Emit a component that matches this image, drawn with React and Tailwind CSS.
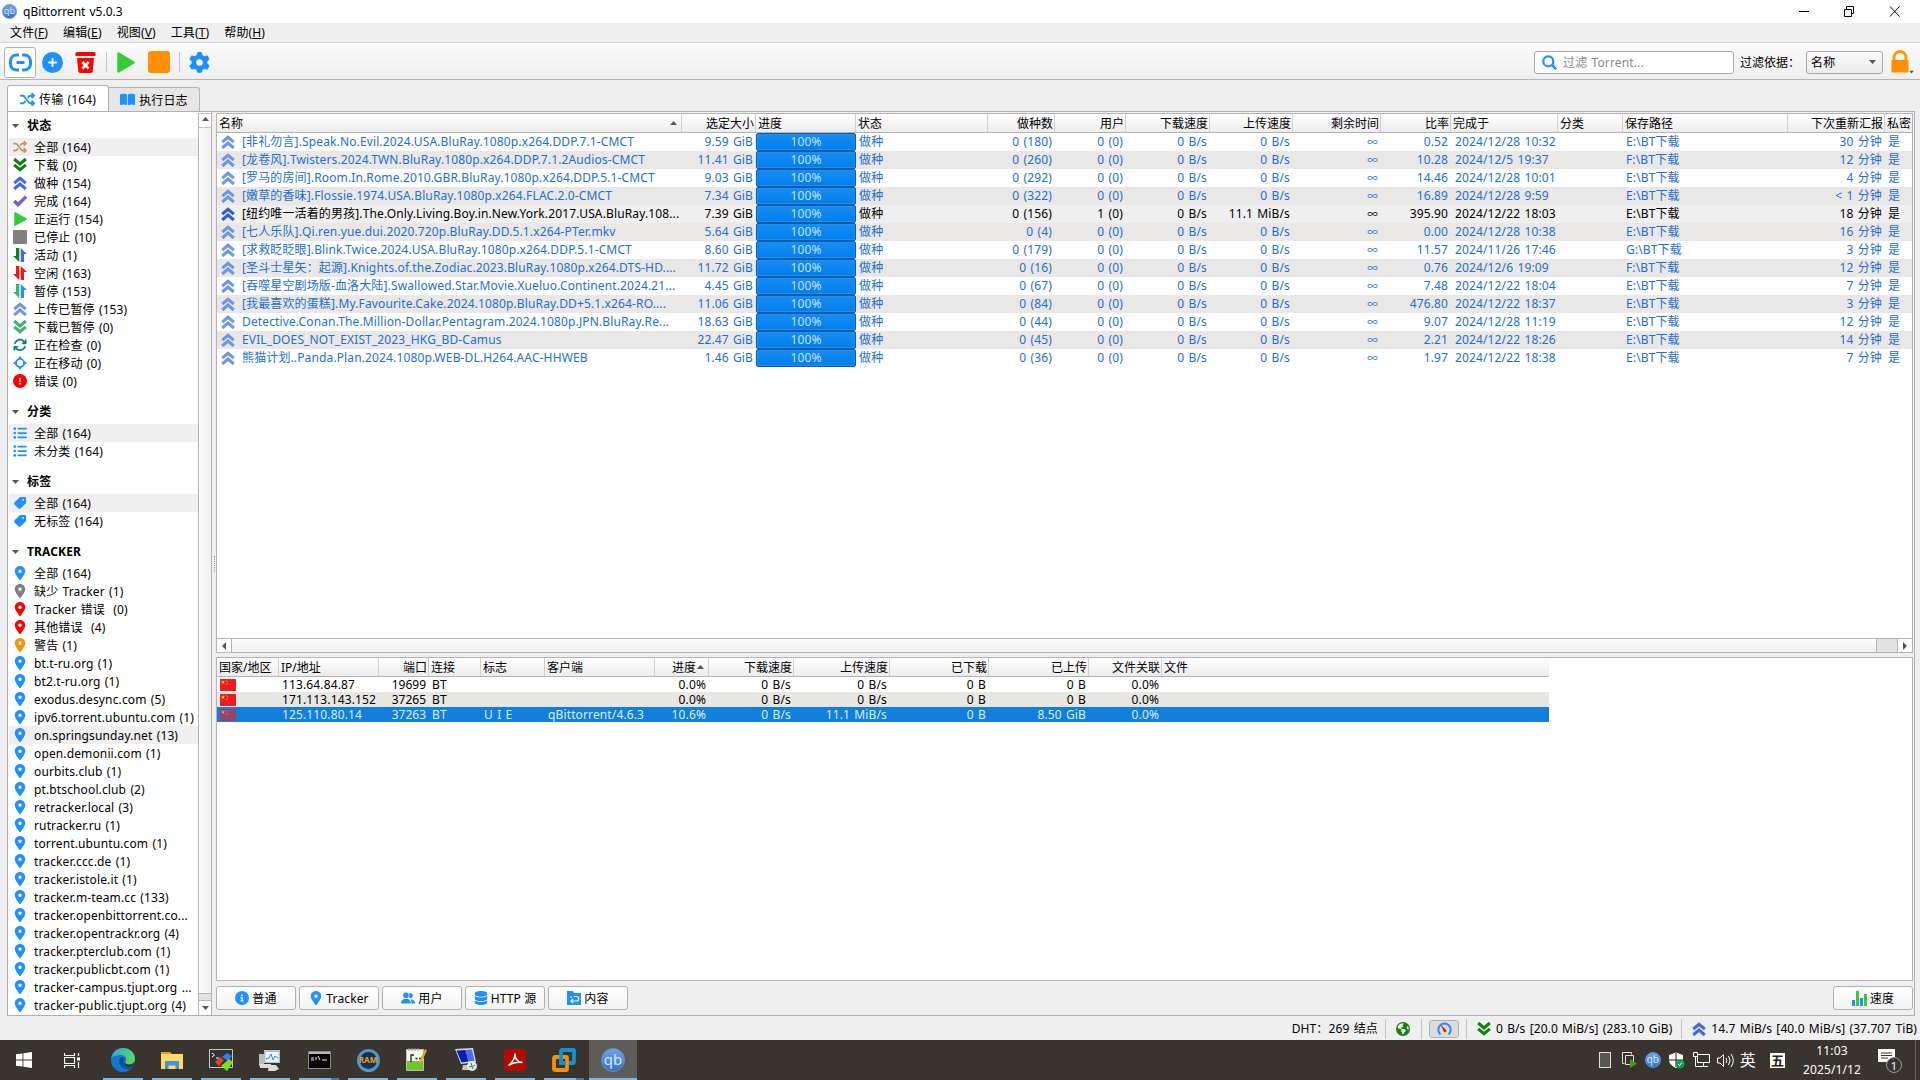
import React from "react";
import {
  FaShuffle, FaLocationDot, FaCirclePlus, FaGear, FaUserGroup, FaDatabase, FaCircleInfo,
  FaCircleExclamation, FaListUl, FaTag, FaBookOpen, FaArrowsRotate, FaEarthAmericas,
} from "react-icons/fa6";

const BLUE = "#1e90ff";

function Chevrons({ color, down, size = 14 }) {
  return (
    <svg width={size} height={size} viewBox="0 0 14 14" className="shrink-0">
      <g fill="none" stroke={color} strokeWidth="3.1" transform={down ? "rotate(180 7 7)" : undefined}>
        <path d="M1.2 7.1 7 2.2l5.8 4.900" />
        <path d="M1.2 13 7 8.100l5.8 4.900" />
      </g>
    </svg>
  );
}

function Arrows({ left, right }) {
  return (
    <svg width="14" height="14" viewBox="0 0 14 14" className="shrink-0">
      <path d="M3 0h3.300v14L0 8h3z" fill={left} />
      <path d="M7.700 14H11V6h3L7.700 0z" fill={right} />
    </svg>
  );
}

function Check() {
  return (
    <svg width="14" height="14" viewBox="0 0 14 14" fill="none" className="shrink-0">
      <path d="m1.200 7 3.800 3.600 8-8" stroke="#7b5bd0" strokeWidth="3.400" />
    </svg>
  );
}

function Play({ w, h }) {
  return (
    <svg width={w} height={h} viewBox="0 0 18 21" preserveAspectRatio="none" className="shrink-0">
      <path d="M1.5 1.5 16.5 10.5 1.5 19.5z" fill="#32cd32" stroke="#32cd32" strokeWidth="2.4" strokeLinejoin="round" />
    </svg>
  );
}

function Diamond() {
  return (
    <svg width="14" height="14" viewBox="0 0 14 14" className="shrink-0">
      <circle cx="7" cy="7" r="4" fill="none" stroke={BLUE} strokeWidth="1.7" />
      <path d="M7 0 9 3H5zM7 14 9 11H5zM0 7 3 5v4zM14 7 11 5v4z" fill={BLUE} />
    </svg>
  );
}

function Bars() {
  return (
    <svg width="15" height="15" viewBox="0 0 15 15" className="shrink-0">
      <path d="M0 9h3v6H0zM8 7h3v8H8z" fill={BLUE} />
      <path d="M4 0h3v15H4zM12 3h3v12h-3z" fill="#32cd32" />
    </svg>
  );
}

function QbLogo({ size }) {
  return (
    <span
      style={{ width: size, height: size, fontSize: size * 0.62 }}
      className="flex shrink-0 items-center justify-center rounded-full border border-[#5b94dc] bg-linear-to-b from-[#6ea4e4] to-[#3a6fc4] leading-none tracking-normal text-[#d6e8ff]"
    >
      <span className="-mt-[1px]">qb</span>
    </span>
  );
}

function Tri({ dir = "down", className = "" }) {
  const d = { down: "M0 0h7L3.5 4z", up: "M0 4h7L3.5 0z", left: "M5 0v8L1 4z", right: "M1 0v8l4-4z" }[dir];
  const v = dir === "left" || dir === "right";
  return (
    <svg width={v ? 6 : 7} height={v ? 8 : 4} viewBox={v ? "0 0 6 8" : "0 0 7 4"} className={"shrink-0 " + className}>
      <path d={d} fill="#555" />
    </svg>
  );
}

const ic = (I, color, size = 14) => <I size={size} color={color} className="shrink-0" />;

const status = [
  [ic(FaShuffle, "#c4965a"), "全部 (164)", true],
  [<Chevrons color="#128012" down />, "下载 (0)"],
  [<Chevrons color="#4169e1" />, "做种 (154)"],
  [<Check />, "完成 (164)"],
  [<Play w={13} h={14} />, "正运行 (154)"],
  [<span className="size-3.5 rounded-[1px] bg-[#808080]" />, "已停止 (10)"],
  [<Arrows left="#128012" right="#4169e1" />, "活动 (1)"],
  [<Arrows left="#ff1010" right="#ff1010" />, "空闲 (163)"],
  [<Arrows left="#3cb371" right="#2f8ee8" />, "暂停 (153)"],
  [<Chevrons color="#6c97e8" />, "上传已暂停 (153)"],
  [<Chevrons color="#3cb371" down />, "下载已暂停 (0)"],
  [ic(FaArrowsRotate, "#0c8080"), "正在检查 (0)"],
  [<Diamond />, "正在移动 (0)"],
  [ic(FaCircleExclamation, "#ff0000"), "错误 (0)"],
];
const cats = [[ic(FaListUl, BLUE), "全部 (164)", true], [ic(FaListUl, BLUE), "未分类 (164)"]];
const tagIc = <FaTag size={14} color={BLUE} className="shrink-0 -scale-x-100" />;
const tags = [[tagIc, "全部 (164)", true], [tagIc, "无标签 (164)"]];
const pin = (c) => ic(FaLocationDot, c);
const trackers = [
  ["全部 (164)"], ["缺少 Tracker (1)", "#808080"], ["Tracker 错误  (0)", "#ff0000"], ["其他错误  (4)", "#ff0000"], ["警告 (1)", "#ff9000"],
  ["bt.t-ru.org (1)"], ["bt2.t-ru.org (1)"], ["exodus.desync.com (5)"], ["ipv6.torrent.ubuntu.com (1)"],
  ["on.springsunday.net (13)", BLUE, true], ["open.demonii.com (1)"], ["ourbits.club (1)"], ["pt.btschool.club (2)"],
  ["retracker.local (3)"], ["rutracker.ru (1)"], ["torrent.ubuntu.com (1)"], ["tracker.ccc.de (1)"], ["tracker.istole.it (1)"],
  ["tracker.m-team.cc (133)"], ["tracker.openbittorrent.co..."], ["tracker.opentrackr.org (4)"], ["tracker.pterclub.com (1)"],
  ["tracker.publicbt.com (1)"], ["tracker-campus.tjupt.org ..."], ["tracker-public.tjupt.org (4)"],
].map(([t, c = BLUE, on]) => [pin(c), t, on]);

function Section({ title, items, first }) {
  return (
    <section>
      <h3 className={(first ? "" : "pt-2.5 ") + "flex items-center pl-[3px] font-bold"}>
        <Tri className="mr-[8px]" />
        <span className="leading-6">{title}</span>
      </h3>
      {items.map(([icon, label, on], i) => (
        <div key={i} className={"flex h-[18px] items-center pl-1 whitespace-pre " + (on ? "bg-[#efefef]" : "")}>
          <span className="mr-[7px] flex w-3.5 items-center justify-center">{icon}</span>
          <span className="pt-[2px]">{label}</span>
        </div>
      ))}
    </section>
  );
}

const torrents = [
  ["[非礼勿言].Speak.No.Evil.2024.USA.BluRay.1080p.x264.DDP.7.1-CMCT", "9.59", "180", "0.52", "2024/12/28 10:32", "E", "30"],
  ["[龙卷风].Twisters.2024.TWN.BluRay.1080p.x264.DDP.7.1.2Audios-CMCT", "11.41", "260", "10.28", "2024/12/5 19:37", "F", "12"],
  ["[罗马的房间].Room.In.Rome.2010.GBR.BluRay.1080p.x264.DDP.5.1-CMCT", "9.03", "292", "14.46", "2024/12/28 10:01", "E", "4"],
  ["[嫩草的香味].Flossie.1974.USA.BluRay.1080p.x264.FLAC.2.0-CMCT", "7.34", "322", "16.89", "2024/12/28 9:59", "E", "< 1"],
  ["[纽约唯一活着的男孩].The.Only.Living.Boy.in.New.York.2017.USA.BluRay.108...", "7.39", "156", "395.90", "2024/12/22 18:03", "E", "18"],
  ["[七人乐队].Qi.ren.yue.dui.2020.720p.BluRay.DD.5.1.x264-PTer.mkv", "5.64", "4", "0.00", "2024/12/28 10:38", "E", "16"],
  ["[求救眨眨眼].Blink.Twice.2024.USA.BluRay.1080p.x264.DDP.5.1-CMCT", "8.60", "179", "11.57", "2024/11/26 17:46", "G", "3"],
  ["[圣斗士星矢：起源].Knights.of.the.Zodiac.2023.BluRay.1080p.x264.DTS-HD....", "11.72", "16", "0.76", "2024/12/6 19:09", "F", "12"],
  ["[吞噬星空剧场版-血洛大陆].Swallowed.Star.Movie.Xueluo.Continent.2024.21...", "4.45", "67", "7.48", "2024/12/22 18:04", "E", "7"],
  ["[我最喜欢的蛋糕].My.Favourite.Cake.2024.1080p.BluRay.DD+5.1.x264-RO....", "11.06", "84", "476.80", "2024/12/22 18:37", "E", "3"],
  ["Detective.Conan.The.Million-Dollar.Pentagram.2024.1080p.JPN.BluRay.Re...", "18.63", "44", "9.07", "2024/12/28 11:19", "E", "12"],
  ["EVIL_DOES_NOT_EXIST_2023_HKG_BD-Camus", "22.47", "45", "2.21", "2024/12/22 18:26", "E", "14"],
  ["熊猫计划..Panda.Plan.2024.1080p.WEB-DL.H264.AAC-HHWEB", "1.46", "36", "1.97", "2024/12/22 18:38", "E", "7"],
];

const TGRID = "grid grid-cols-[465px_74px_100px_132px_67px_71px_84px_83px_88px_70px_107px_65px_165px_97px_27px]";
const thead = [["名称"], ["选定大小", 1], ["进度"], ["状态"], ["做种数", 1], ["用户", 1], ["下载速度", 1], ["上传速度", 1], ["剩余时间", 1], ["比率", 1], ["完成于"], ["分类"], ["保存路径"], ["下次重新汇报", 1], ["私密"]];
const PGRID = "grid grid-cols-[62px_100px_50px_52px_64px_110px_54px_85px_96px_99px_100px_73px_387px]";
const phead = [["国家/地区"], ["IP/地址"], ["端口", 1], ["连接"], ["标志"], ["客户端"], ["进度", 1], ["下载速度", 1], ["上传速度", 1], ["已下载", 1], ["已上传", 1], ["文件关联", 1], ["文件"]];
const peers = [
  ["113.64.84.87", "19699", "", "", "0.0%", "0 B/s", "0 B"],
  ["171.113.143.152", "37265", "", "", "0.0%", "0 B/s", "0 B"],
  ["125.110.80.14", "37263", "U I E", "qBittorrent/4.6.3", "10.6%", "11.1 MiB/s", "8.50 GiB"],
];

function Head({ cols, grid, sorted }) {
  return (
    <div className={grid + " h-[19px] shrink-0 border-b border-[#b4b4b4] bg-linear-to-b from-white to-[#ececec]"}>
      {cols.map(([t, r], i) => (
        <div
          key={t}
          className={"flex h-[18px] items-center pt-px whitespace-nowrap pl-0.5 tracking-normal " + (r ? "justify-end pr-px " : "") + (i < cols.length - 1 ? "border-r border-[#cfcfcf]" : "")}
        >
          {t}
          {sorted === i && <Tri dir="up" className={r ? "mr-[3px] mb-[2px] ml-px" : "mr-1 mb-[2px] ml-auto"} />}
        </div>
      ))}
    </div>
  );
}

const R = ({ children, className = "" }) => <div className={"pr-[3px] text-right whitespace-nowrap " + className}>{children}</div>;
const L = ({ children }) => <div className="pl-[3px] whitespace-nowrap">{children}</div>;

function TorrentRow({ t, i }) {
  const hot = i === 4;
  const bg = hot ? "bg-[#efefef] text-black" : i % 2 ? "bg-[#e9e8e6] text-[#1e6fd0]" : "text-[#1e6fd0]";
  return (
    <div className={TGRID + " h-[18px] leading-[18px] " + bg}>
      <div className="flex items-center pl-1 whitespace-nowrap">
        <Chevrons color={hot ? "#2f62d0" : "#6c97e8"} />
        <span className="ml-[7px]">{t[0]}</span>
      </div>
      <R>{t[1]} GiB</R>
      <div className="flex h-[18px] items-center justify-center rounded-xs border border-[#0a5aa6] bg-linear-to-b from-[#158cf2] to-[#007fec] text-[#c4e3ff] shadow-[inset_0_0_0_1px_#1f90f0]">100%</div>
      <div className="pl-[3px]">做种</div>
      <R>0 ({t[2]})</R>
      <R>{hot ? 1 : 0} (0)</R>
      <R>0 B/s</R>
      <R>{hot ? "11.1 MiB/s" : "0 B/s"}</R>
      <R className="text-[10.5px]">∞</R>
      <R>{t[3]}</R>
      <div className="pl-1 whitespace-nowrap">{t[4]}</div>
      <div />
      <L>{t[5]}:\BT下载</L>
      <R>{t[6]} 分钟</R>
      <div className="pl-[3px]">是</div>
    </div>
  );
}

function Flag({ sel }) {
  return (
    <svg width="16" height="12" viewBox="0 0 16 12" className={sel ? "opacity-60" : ""}>
      <path d="M0 0h16v12H0z" fill="#ee1c25" />
      <path d="m3 1 .5 1.4H5L3.8 3.3l.5 1.5L3 3.9l-1.300.9.5-1.500L1 2.400h1.500z" fill="#ff0" />
      <g fill="#f9b020"><circle cx="6.200" cy="1.200" r=".5" /><circle cx="7.300" cy="2.500" r=".5" /><circle cx="7.300" cy="4.200" r=".5" /><circle cx="6.200" cy="5.400" r=".5" /></g>
    </svg>
  );
}

function PeerRow({ p, i }) {
  const sel = i === 2;
  return (
    <div className={PGRID + " h-[15px] w-[1332px] leading-[15px] " + (sel ? "bg-[#127fdc] text-[#d9efff]" : i ? "bg-[#e9e7e3]" : "")}>
      <div className="flex items-center pl-[3px]"><Flag sel={sel} /></div>
      <div className="pl-[3px]">{p[0]}</div>
      <R className="tracking-normal">{p[1]}</R>
      <L>BT</L>
      <div className="pl-[3px]">{p[2]}</div>
      <L>{p[3]}</L>
      <R>{p[4]}</R>
      <R>0 B/s</R>
      <R>{p[5]}</R>
      <R>0 B</R>
      <R>{p[6]}</R>
      <R>0.0%</R>
      <div />
    </div>
  );
}

function Btn({ icon, children }) {
  return (
    <button className="flex h-6 w-20 items-center justify-center gap-[3px] rounded-[3px] border border-[#b0b0b0] bg-linear-to-b from-white to-[#f3f3f3] whitespace-nowrap">
      {icon}
      <span className="pt-px">{children}</span>
    </button>
  );
}

const Sep = ({ className = "" }) => <span className={"w-px bg-[#c4c4c4] " + className} />;

const menus = [["文件", "F"], ["编辑", "E"], ["视图", "V"], ["工具", "T"], ["帮助", "H"]];

function Toolbar() {
  return (
    <div className="flex h-[39px] items-center border-y border-t-[#d6d6d6] border-b-[#b4b4b4] bg-linear-to-b from-[#fbfbfb] to-[#efefef] pt-[2px] pl-1">
      <span className="flex h-[31px] w-8 items-center justify-center rounded-[3px] border border-[#b0b0b0] bg-white">
        <svg width="23" height="19" viewBox="0 0 23 19" fill="none" stroke={BLUE} strokeWidth="3">
          <path d="M10 2H7.500a6 6 0 0 0-6 6v3a6 6 0 0 0 6 6H10M13 2h2.500a6 6 0 0 1 6 6v3a6 6 0 0 1-6 6H13M7.500 9.500h8" />
        </svg>
      </span>
      <FaCirclePlus size={21} color={BLUE} className="ml-[6px]" />
      <svg width="21" height="21" viewBox="0 0 21 21" className="ml-3">
        <path d="M.5 1.500Q.5 0 2 0h17q1.500 0 1.500 1.500V4H.5z" fill="#ff0000" />
        <path d="M2 6h17l-1.300 13.200Q17.500 21 16 21H5Q3.500 21 3.300 19.200z" fill="#ff0000" />
        <path d="m7.300 10 6.400 6.600M13.700 10l-6.400 6.600" stroke="#fff" strokeWidth="2.600" />
      </svg>
      <Sep className="mx-[10px] h-5" />
      <Play w={18} h={21} />
      <span className="ml-[13px] size-[22px] rounded-[3px] bg-[#ff9000]" />
      <Sep className="mr-[9px] ml-[9px] h-5" />
      <FaGear size={21} color={BLUE} />
      <div className="ml-auto flex h-[23px] w-[200px] items-center rounded-[3px] border border-[#a8a8a8] bg-white pl-[7px] text-[#8a8a8a]">
        <svg width="15" height="15" viewBox="0 0 15 15" fill="none" stroke={BLUE}>
          <circle cx="6.300" cy="6.300" r="5" strokeWidth="2.200" />
          <path d="m10 10 4.200 4.200" strokeWidth="2.600" />
        </svg>
        <span className="ml-[6px] pt-px">过滤 Torrent...</span>
      </div>
      <span className="ml-[6px] w-[66px] pt-px tracking-normal">过滤依据：</span>
      <div className="flex h-[23px] w-[77px] items-center justify-between rounded-[3px] border border-[#a8a8a8] bg-linear-to-b from-[#fafafa] to-[#ebebeb] pr-[6px] pl-1">
        <span className="pt-px">名称</span>
        <Tri />
      </div>
      <div className="relative mr-[10px] ml-[7px]">
        <svg width="20" height="24" viewBox="0 0 20 24">
          <path d="M4 11V7.500a6 6 0 0 1 12 0V11" fill="none" stroke="#ff9800" strokeWidth="2.800" />
          <path d="M1.500 10h17v12.500h-17z" fill="#ff9000" />
        </svg>
        <Tri className="absolute -right-[5px] bottom-0 scale-75" />
      </div>
    </div>
  );
}

function Sidebar() {
  return (
    <div className="flex w-[204px] border-r border-[#b4b4b4] bg-white">
      <div className="min-w-0 flex-1 overflow-hidden pt-[2px] pl-[1px]">
        <Section title="状态" items={status} first />
        <Section title="分类" items={cats} />
        <Section title="标签" items={tags} />
        <Section title="TRACKER" items={trackers} />
      </div>
      <div className="mt-px flex w-[13px] flex-col border-l border-[#b4b4b4] bg-[#e2e2e2]">
        <span className="flex h-[15px] items-center justify-center border-y border-[#c4c4c4] bg-white pb-1"><Tri dir="up" /></span>
        <span className="h-[866px] border-b border-[#b4b4b4] bg-linear-to-r from-[#fdfdfd] to-[#f0f0f0]" />
        <span className="mt-auto flex h-[15px] items-center justify-center border-t border-[#b4b4b4] bg-white"><Tri /></span>
      </div>
    </div>
  );
}

function Main() {
  return (
    <div className="flex min-w-0 flex-1 flex-col pt-px pr-px">
      <div className="flex h-[540px] flex-col border border-[#b4b4b4] bg-white">
        <Head cols={thead} grid={TGRID} sorted={0} />
        <div className="flex-1">{torrents.map((t, i) => <TorrentRow key={i} t={t} i={i} />)}</div>
        <div className="flex h-[14px] border-t border-[#b4b4b4] bg-[#e2e2e2]">
          <span className="flex w-[15px] items-center justify-center border-r border-[#b4b4b4] bg-white"><Tri dir="left" /></span>
          <span className="w-[1645px] border-r border-[#b4b4b4] bg-linear-to-b from-[#fdfdfd] to-[#f0f0f0]" />
          <span className="ml-auto flex w-[15px] items-center justify-center border-l border-[#b4b4b4] bg-white"><Tri dir="right" /></span>
        </div>
      </div>
      <div className="mt-1 flex h-[324px] flex-col border border-[#b4b4b4] bg-white">
        <div className="w-[1332px]"><Head cols={phead} grid={PGRID} sorted={6} /></div>
        {peers.map((p, i) => <PeerRow key={i} p={p} i={i} />)}
      </div>
      <div className="mt-[5px] flex gap-[3px]">
        <Btn icon={ic(FaCircleInfo, BLUE)}>普通</Btn>
        <Btn icon={ic(FaLocationDot, BLUE)}>Tracker</Btn>
        <Btn icon={ic(FaUserGroup, BLUE)}>用户</Btn>
        <Btn icon={ic(FaDatabase, BLUE)}>HTTP 源</Btn>
        <Btn
          icon={
            <svg width="14" height="14" viewBox="0 0 14 14">
              <path d="M0 0h6l1 2h7v12H0z" fill={BLUE} />
              <path d="M3 6h2M7 5.500h2.500a2 2 0 0 1 0 4.500H4M6 8l-2 2 2 2" fill="none" stroke="#fff" strokeWidth="1.200" />
            </svg>
          }
        >
          内容
        </Btn>
        <div className="ml-auto"><Btn icon={<Bars />}>速度</Btn></div>
      </div>
    </div>
  );
}

function StatusBar() {
  return (
    <div className="flex h-6 items-center justify-end pt-px pr-[3px] whitespace-nowrap">
      <span>DHT：269 结点</span>
      <Sep className="mr-[10px] ml-[7px] h-5" />
      <FaEarthAmericas size={14} color="#128012" />
      <Sep className="mr-[7px] ml-[11px] h-5" />
      <span className="flex h-[18px] w-[30px] items-center justify-center rounded-[3px] border border-[#b0b0b0] bg-[#dcdcdc]">
        <svg width="15" height="14" viewBox="0 0 15 14" fill="none">
          <path d="M3.500 12.500a6.200 6.200 0 1 1 8 0" stroke={BLUE} strokeWidth="2" />
          <path d="m3.500 2.500 5.500 5.500a1.300 1.300 0 0 1-2 1.800z" fill="#ff0000" />
        </svg>
      </span>
      <Sep className="mr-[10px] ml-[7px] h-5" />
      <Chevrons color="#128012" down />
      <span className="ml-[5px] tracking-[0.09px]">0 B/s [20.0 MiB/s] (283.10 GiB)</span>
      <Sep className="mr-[10px] ml-[9px] h-5" />
      <Chevrons color="#4169e1" />
      <span className="ml-[5px] tracking-[0.09px]">14.7 MiB/s [40.0 MiB/s] (37.707 TiB)</span>
    </div>
  );
}

const apps = [
  <svg width="24" height="24" viewBox="0 0 24 24">
    <defs>
      <linearGradient id="eg" x1="0" y1="0" x2="1" y2=".3"><stop offset="0" stopColor="#2aa5e0" /><stop offset="1" stopColor="#58d668" /></linearGradient>
    </defs>
    <circle cx="12" cy="12" r="12" fill="#1478cc" />
    <path d="M.3 10C1.500 3.500 6.500 0 12.200 0 19 0 24 5 24 10.800c0 3.500-2.700 5.700-5.700 5.700-2.500 0-4-1-4-2 0-.8 1-1.200 1-3C15.300 9 13 7 9.700 7 6 7 2 8 .3 10z" fill="url(#eg)" />
    <path d="M9 10c-2.500 5.500 1.500 11 8.500 11.500 2 0 3.500-.8 4.700-2.300-3 1-9.700.5-9.700-4.700 0-1.500 1-2 1-3.500C13 9 10.500 8.500 9 10z" fill="#0e4d94" />
    <path d="M14.300 14.500c0 1 1.500 2 4 2 2 0 4-1 5-2.500-.3 2-.7 3.500-1.400 4.500-4 2-8.600 0-8.600-3 0-.8.500-1.200 1-1z" fill="#3c352f" />
  </svg>,
  <svg width="22" height="19" viewBox="0 0 22 19">
    <path d="M0 1h9l2 2H0z" fill="#e0a010" /><path d="M0 3h22v15H0z" fill="#ffd76a" /><path d="M4 18v-8h14v8h-3.500v-3.500h-7V18z" fill="#3a97d8" />
  </svg>,
  <svg width="25" height="22" viewBox="0 0 25 22">
    <path d="M.5.500h23v18H.5z" fill="#303236" stroke="#c8c8c8" /><path d="m3 4 2.500 2L3 8M7 9h3" fill="none" stroke="#fff" />
    <path d="m6 13 5-5 4 3-5 6z" fill="#e8402c" /><path d="m13 8 5-4 5 3-4 5z" fill="#2f7cf0" /><path d="m12 17 8-7 4 3-6 9z" fill="#7be020" />
  </svg>,
  <svg width="22" height="21" viewBox="0 0 22 21">
    <path d="M5 0h16v13H5zM0 4h5v12H0z" fill="#b9bdbf" /><path d="M6.500 2h13v10h-13z" fill="#eaf6fc" /><path d="M7 9l3-1 2-4 2 6 2-4 3 2" fill="none" stroke="#2a8fd0" /><path d="M1 14h11v4H1zM10 15h7l3 4-4 2H9z" fill="#dcdcdc" />
  </svg>,
  <svg width="23" height="18" viewBox="0 0 23 18">
    <path d="M.5.500h22v17H.5z" fill="#050505" stroke="#8a8a8a" /><path d="M1 1h21v2H1z" fill="#b8b8b8" /><path d="M3 7h3M3 9h3M8 6v3M10 5l2 4M14 9h5" stroke="#eee" />
  </svg>,
  <span className="flex size-[23px] items-center justify-center rounded-full border-[3px] border-[#4d97c9] bg-[#12334f]">
    <b className="text-[8px] leading-none text-[#ff9a20]">RAM</b>
  </span>,
  <svg width="22" height="24" viewBox="0 0 22 24">
    <path d="M.5 1.500h17v21H.5z" fill="#f5f5f0" stroke="#bbb" /><path d="M1 13h16v9H1z" fill="#6fc52c" /><path d="M5 14V7h3M9.500 10.500h2M13 10.500h2" fill="none" stroke="#222" strokeWidth="1.300" /><path d="m13 14 6-13 2 1.500L15.500 14 13 16z" fill="#e8a020" /><path d="M3 0v3M6 0v3M9 0v3M12 0v3" stroke="#999" />
  </svg>,
  <svg width="22" height="24" viewBox="0 0 22 24">
    <path d="M0 1 18 0l3 14-15 2z" fill="#d8dcdf" /><path d="m1.500 2.500 9-.5 3 11.500-7 1z" fill="#0a1fb0" /><path d="M10.500 2 17 1.500l2.500 11.500-6 .500z" fill="#4b6cf0" /><path d="M8 17h8l3 5H7z" fill="#c4c8ca" /><circle cx="17" cy="18" r="5" fill="#e3ece4" /><path d="m14 19 3-1-1-3M20 17l-3 2 1 2" fill="none" stroke="#2f8a3a" />
  </svg>,
  <svg width="22" height="22" viewBox="0 0 22 22">
    <rect width="22" height="22" rx="3.500" fill="#b30b00" /><path d="M5 16c3-2 6-7 6-11 0 5 3 8 7 8.500-4-.5-9 0-13 2.500z" fill="none" stroke="#fff" strokeWidth="1.500" strokeLinejoin="round" />
  </svg>,
  <svg width="24" height="24" viewBox="0 0 24 24" fill="none" strokeWidth="3.800">
    <rect x="9" y="2" width="13" height="13" rx="1" stroke="#1492cf" /><rect x="2" y="9" width="13" height="13" rx="1" stroke="#f79009" /><path d="M9 7v8h5" stroke="#1492cf" />
  </svg>,
  <QbLogo size={24} />,
];

function Taskbar() {
  return (
    <div className="flex h-10 bg-[#3a342e] text-white">
      <span className="flex w-12 items-center justify-center">
        <svg width="16" height="16" viewBox="0 0 16 16" fill="#fff"><path d="M0 2.300 6.500 1.400v6.100H0zM7.400 1.300 16 0v7.500H7.400zM0 8.400h6.500v6.200L0 13.700zM7.400 8.400H16V16l-8.600-1.200z" /></svg>
      </span>
      <span className="mr-[3px] flex w-12 items-center justify-center">
        <svg width="16" height="15" viewBox="0 0 16 15" fill="none" stroke="#fff"><path d="M.5 0v2.500h10V0M.5 15v-2.500h10V15M.5 4.500h10v6H.5zM14.500 0v3M14.500 9v6" strokeWidth="1.200" /><path d="M13 4.500h3v3h-3z" fill="#fff" stroke="none" /></svg>
      </span>
      {apps.map((a, i) => (
        <span
          key={i}
          className={"mr-px flex h-full w-12 flex-col items-center " + (i === 10 ? "bg-[#5f5b56]" : "")}
        >
          <span className="flex h-[38px] items-center justify-center pt-[2px]">{a}</span>
          <span className={"flex h-0.5 bg-[#76b9ed] " + (i === 10 ? "w-full" : "w-10")}>
            {(i === 4 || i === 9) && <span className="ml-auto w-2 bg-[#4a7ba3]" />}
          </span>
        </span>
      ))}
      <div className="ml-auto flex items-center">
        <span className="h-4 w-3 border border-[#ddd] bg-[#5a5651]" />
        <svg width="15" height="16" viewBox="0 0 15 16" className="ml-[11px]" fill="none" stroke="#ddd"><path d="M2.500 11.500h-2V.500h9v2M3.500 3.500h8v9h-8z" /><path d="m8 7 7 4.500L8 16z" fill="#3f9a2c" stroke="none" /></svg>
        <span className="ml-[8px]"><QbLogo size={16} /></span>
        <svg width="17" height="17" viewBox="0 0 17 17" className="ml-[7px]"><path d="M8 .500 15 3v5c0 3.500-3 6-7 8-4-2-7-4.500-7-8V3z" fill="#fff" /><path d="M8 1v14M1 8h14" stroke="#222" /><circle cx="12" cy="12" r="4.500" fill="#169a54" /><path d="m10 12 1.500 1.500L14 10.500" fill="none" stroke="#fff" /></svg>
        <svg width="17" height="16" viewBox="0 0 17 16" className="ml-[8px]" fill="none" stroke="#fff"><path d="M4.500 2.500h12v8h-12zM10.500 10.500v4M6 14.500h9M.5.500h4v4h-4zM2.500 4.500v10h4" /></svg>
        <svg width="17" height="15" viewBox="0 0 17 15" className="ml-[7px]" fill="none" stroke="#fff"><path d="M.5 5h2.500l3.500-3.500v12L3 10H.500zM9 5q1.500 2.500 0 5M11.500 3q3 4.500 0 9M14 1q4.500 6.500 0 13" /></svg>
        <span className="ml-1.5 text-base leading-none">英</span>
        <span className="ml-[14px] flex size-[15px] items-center justify-center bg-white text-[13px] leading-none font-bold text-[#222]">五</span>
        <span className="ml-[15px] w-[64px] text-center leading-none">
          <span className="block">11:03</span>
          <span className="mt-[7px] block">2025/1/12</span>
        </span>
        <span className="relative mr-[13px] ml-[14px] h-[22px] w-6">
          <svg width="17" height="17" viewBox="0 0 17 17"><path d="M0 0h17v13h-4l-4 4v-4H0z" fill="#fff" /><path d="M3 4h11M3 6.500h11M3 9h7" stroke="#3a342e" /></svg>
          <span className="absolute top-[8px] left-[8px] flex size-4 items-center justify-center rounded-full border border-[#999] bg-[#3a342e] text-[11px] leading-none">1</span>
        </span>
        <span className="h-10 w-[5px] border-l border-[#6a655f]" />
      </div>
    </div>
  );
}

export default function App() {
  return (
    <div className="flex h-[1080px] w-[1920px] flex-col overflow-hidden bg-[#efefef] font-['Noto_Sans','Noto_Sans_CJK_SC',sans-serif] text-[12px] leading-[18px] tracking-[0.13px] text-black [word-spacing:1px]">
      <header className="flex h-[23px] shrink-0 items-center bg-white pl-[2px]">
        <QbLogo size={15} />
        <span className="ml-1.5 tracking-normal">qBittorrent v5.0.3</span>
        <svg width="101" height="11" viewBox="0 0 101 11" className="mr-5 ml-auto" fill="none" stroke="#000">
          <path d="M0 5.500h10M45.500 3.500h7v7h-7zM47.500 3v-2.500h7v7H53M91 .500l9.500 10M100.500.500 91 10.500" />
        </svg>
      </header>
      <nav className="flex h-[19px] shrink-0 items-center gap-[15px] pt-px pl-[10px]">
        {menus.map(([t, k]) => (
          <span key={k}>{t}(<u>{k}</u>)</span>
        ))}
      </nav>
      <Toolbar />
      <div className="flex h-[31px] shrink-0 items-end pl-[7px]">
        <div className="-mb-px flex h-[27px] w-[102px] items-center justify-center gap-1 rounded-t-[3px] border border-b-0 border-[#b0b0b0] bg-white">
          {ic(FaShuffle, BLUE, 15)}<span className="pt-[2px]">传输 (164)</span>
        </div>
        <div className="flex h-[24px] w-[91px] items-center justify-center gap-1 rounded-tr-[3px] border border-b-0 border-l-0 border-[#b4b4b4] bg-[#e6e6e6]">
          {ic(FaBookOpen, BLUE, 15)}<span className="pt-[2px]">执行日志</span>
        </div>
      </div>
      <main className="mr-[5px] ml-[7px] flex h-[905px] shrink-0 border border-[#b0b0b0]">
        <Sidebar />
        <div className="flex w-1 items-center justify-center">
          <span className="h-4 border-l border-dotted border-[#999]" />
        </div>
        <Main />
      </main>
      <StatusBar />
      <Taskbar />
    </div>
  );
}
